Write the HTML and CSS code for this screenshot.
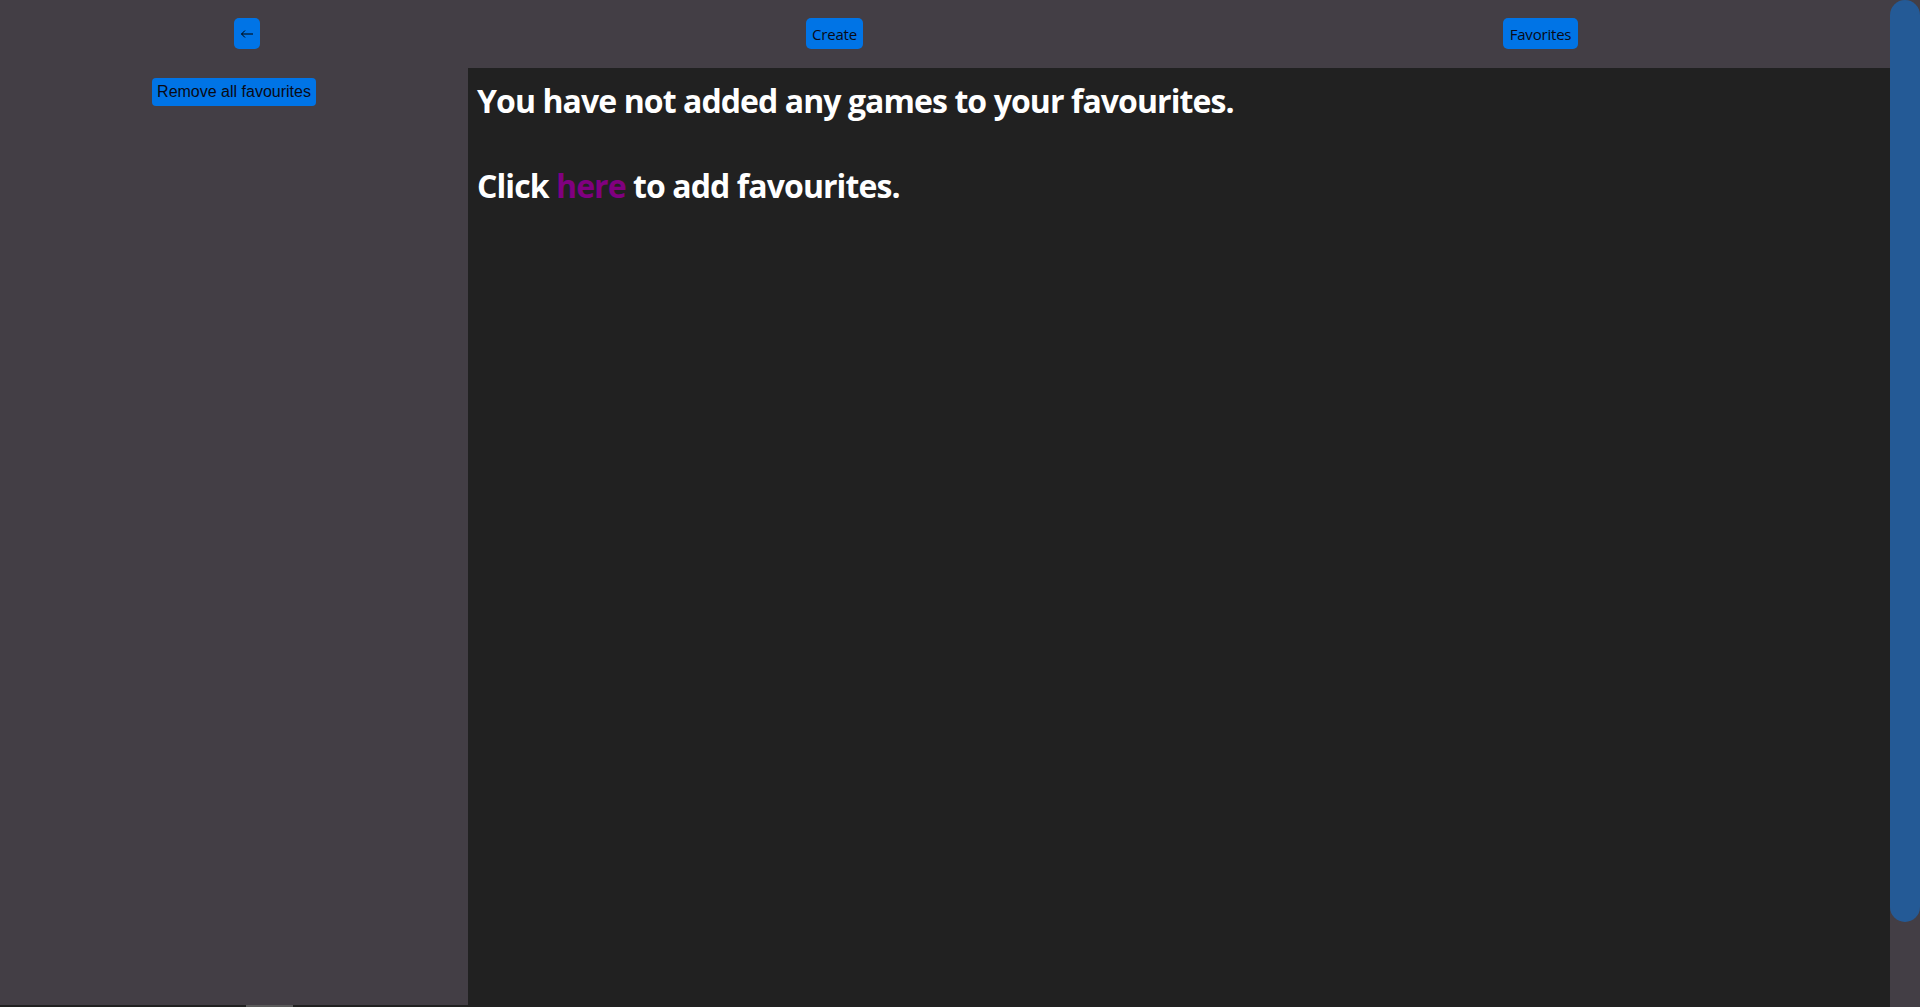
FILE: index.html
```html
<!DOCTYPE html>
<html lang="en">
<head>
<meta charset="utf-8">
<title>Favourites</title>
<link rel="stylesheet" href="styles.css">
</head>
<body>
<div class="page">
  <header class="topbar">
    <button class="btn btn-back" aria-label="Back">
      <svg width="12" height="8" viewBox="0 0 12 8"><path d="M0.5 4H12M4 0.5L0.5 4L4 7.5" fill="none" stroke="#000" stroke-width="1"/></svg>
    </button>
    <button class="btn btn-create">Create</button>
    <button class="btn btn-fav">Favorites</button>
  </header>
  <div class="layout">
    <aside class="sidebar">
      <button class="btn-remove">Remove all favourites</button>
    </aside>
    <main class="content">
      <h1 class="message">You have not added any games to your favourites.<br><br>Click <a class="link" href="#">here</a> to add favourites.</h1>
    </main>
  </div>
  <div class="below">
    <div class="below-bar"></div>
  </div>
</div>
<div class="scroll-rail" aria-hidden="true">
  <div class="scroll-thumb"></div>
</div>
</body>
</html>
```
FILE: styles.css
```css
html, body {
  height: 100%;
}
body {
  margin: 0;
  background: #212121;
  font-family: "Open Sans", "Noto Sans", sans-serif;
  display: flex;
  overflow: hidden;
}
.page {
  flex: 1;
  display: flex;
  flex-direction: column;
  min-width: 0;
}
.scroll-rail {
  width: 30px;
  height: 1007px;
  background: #433e45;
  flex-shrink: 0;
}
.scroll-thumb {
  height: 922px;
  background: #245a96;
  border-radius: 15px;
}
.topbar {
  height: 68px;
  background: #433e45;
  display: flex;
  align-items: flex-start;
  padding-top: 18px;
  box-sizing: border-box;
  flex-shrink: 0;
}
.btn {
  background: #0074e6;
  border: none;
  border-radius: 5px;
  height: 31px;
  padding: 0;
  font-family: "Open Sans", "Noto Sans", sans-serif;
  font-size: 15px;
  color: #0a0a14;
  display: flex;
  align-items: center;
  justify-content: center;
  letter-spacing: -0.2px;
}
.btn-back {
  width: 26px;
  margin-left: 234px;
}
.btn-create {
  width: 57px;
  margin-left: 546px;
}
.btn-fav {
  width: 75px;
  margin-left: 640px;
}
.layout {
  display: flex;
  height: 937px;
  flex-shrink: 0;
}
.sidebar {
  width: 468px;
  background: #433e45;
  display: flex;
  justify-content: center;
  align-items: flex-start;
  padding-top: 10px;
  box-sizing: border-box;
}
.btn-remove {
  background: #0074e6;
  border: none;
  border-radius: 4px;
  height: 28px;
  width: 164px;
  padding: 0;
  font-family: "Liberation Sans", Arial, sans-serif;
  font-size: 16px;
  color: #0a0a14;
}
.content {
  flex: 1;
  background: #212121;
  padding: 12px 9px 0;
}
.message {
  margin: 0;
  font-family: "Open Sans", "Noto Sans", sans-serif;
  font-weight: 700;
  font-size: 32px;
  line-height: 42.6px;
  color: #ffffff;
  letter-spacing: -0.92px;
}
.link {
  color: #800080;
  text-decoration: none;
}
.below {
  height: 2px;
  background: #212121;
  flex-shrink: 0;
}
.below-bar {
  width: 47px;
  height: 2px;
  margin-left: 246px;
  background: #5a5a5a;
}
```
